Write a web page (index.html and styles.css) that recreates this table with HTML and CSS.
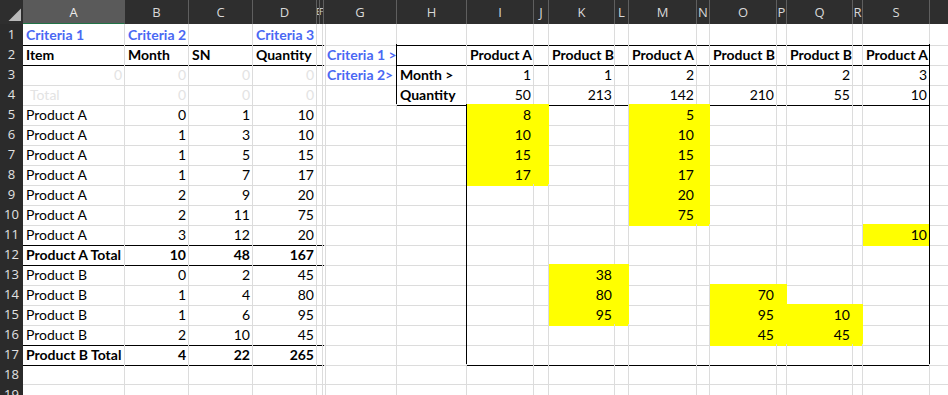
FILE: index.html
```html
<!DOCTYPE html>
<html>
<head>
<meta charset="utf-8">
<link rel="stylesheet" href="styles.css">
</head>
<body>
<div class="sheet">
  <div class="row hdr">
    <div class="h corner"><svg width="23" height="24" viewBox="0 0 23 24"><path d="M8.5 21 L21 8.5 L21 21 Z" fill="#b9b9b9"/></svg></div>
    <div class="h sel">A</div><div class="h">B</div><div class="h">C</div><div class="h">D</div><div class="h tiny">E</div><div class="h tiny">F</div><div class="h">G</div><div class="h">H</div><div class="h">I</div><div class="h">J</div><div class="h">K</div><div class="h">L</div><div class="h">M</div><div class="h">N</div><div class="h">O</div><div class="h">P</div><div class="h">Q</div><div class="h">R</div><div class="h">S</div><div class="h"></div>
  </div>
  <div class="row">
    <div class="rh">1</div>
    <div class="c bl b bb">Criteria 1</div><div class="c bl b bb">Criteria 2</div><div class="c bb"></div><div class="c bl b bb">Criteria 3</div><div class="c bb"></div><div class="c bb"></div>
    <div class="c"></div><div class="c bb"></div><div class="c bb"></div><div class="c bb"></div><div class="c bb"></div><div class="c bb"></div><div class="c bb"></div><div class="c bb"></div><div class="c bb"></div><div class="c bb"></div><div class="c bb"></div><div class="c bb"></div><div class="c bb"></div><div class="c"></div>
  </div>
  <div class="row">
    <div class="rh">2</div>
    <div class="c b bb">Item</div><div class="c b bb">Month</div><div class="c b bb">SN</div><div class="c b bb">Quantity</div><div class="c bb"></div><div class="c bb"></div>
    <div class="c bl b br">Criteria 1 &gt;</div><div class="c bb"></div><div class="c b bb">Product A</div><div class="c bb"></div><div class="c b bb">Product B</div><div class="c bb"></div><div class="c b bb">Product A</div><div class="c bb"></div><div class="c b bb">Product B</div><div class="c bb"></div><div class="c b bb">Product B</div><div class="c bb"></div><div class="c b bb br">Product A</div><div class="c"></div>
  </div>
  <div class="row">
    <div class="rh">3</div>
    <div class="c r gz">0</div><div class="c r gz">0</div><div class="c r gz">0</div><div class="c r gz">0</div><div class="c"></div><div class="c"></div>
    <div class="c bl b br">Criteria 2&gt;</div><div class="c b">Month &gt;</div><div class="c r">1</div><div class="c"></div><div class="c r">1</div><div class="c"></div><div class="c r">2</div><div class="c"></div><div class="c"></div><div class="c"></div><div class="c r">2</div><div class="c"></div><div class="c r br">3</div><div class="c"></div>
  </div>
  <div class="row">
    <div class="rh">4</div>
    <div class="c gz ind">Total</div><div class="c r gz">0</div><div class="c r gz">0</div><div class="c r gz">0</div><div class="c"></div><div class="c"></div>
    <div class="c br"></div><div class="c b bb">Quantity</div><div class="c r bb">50</div><div class="c bb"></div><div class="c r bb">213</div><div class="c bb"></div><div class="c r bb">142</div><div class="c bb"></div><div class="c r bb">210</div><div class="c bb"></div><div class="c r bb">55</div><div class="c bb"></div><div class="c r bb br">10</div><div class="c"></div>
  </div>
  <div class="row">
    <div class="rh">5</div>
    <div class="c">Product A</div><div class="c r">0</div><div class="c r">1</div><div class="c r">10</div><div class="c"></div><div class="c"></div>
    <div class="c"></div><div class="c br"></div><div class="c r y">8</div><div class="c y"></div><div class="c"></div><div class="c"></div><div class="c r y">5</div><div class="c y"></div><div class="c"></div><div class="c"></div><div class="c"></div><div class="c"></div><div class="c br"></div><div class="c"></div>
  </div>
  <div class="row">
    <div class="rh">6</div>
    <div class="c">Product A</div><div class="c r">1</div><div class="c r">3</div><div class="c r">10</div><div class="c"></div><div class="c"></div>
    <div class="c"></div><div class="c br"></div><div class="c r y">10</div><div class="c y"></div><div class="c"></div><div class="c"></div><div class="c r y">10</div><div class="c y"></div><div class="c"></div><div class="c"></div><div class="c"></div><div class="c"></div><div class="c br"></div><div class="c"></div>
  </div>
  <div class="row">
    <div class="rh">7</div>
    <div class="c">Product A</div><div class="c r">1</div><div class="c r">5</div><div class="c r">15</div><div class="c"></div><div class="c"></div>
    <div class="c"></div><div class="c br"></div><div class="c r y">15</div><div class="c y"></div><div class="c"></div><div class="c"></div><div class="c r y">15</div><div class="c y"></div><div class="c"></div><div class="c"></div><div class="c"></div><div class="c"></div><div class="c br"></div><div class="c"></div>
  </div>
  <div class="row">
    <div class="rh">8</div>
    <div class="c">Product A</div><div class="c r">1</div><div class="c r">7</div><div class="c r">17</div><div class="c"></div><div class="c"></div>
    <div class="c"></div><div class="c br"></div><div class="c r y">17</div><div class="c y"></div><div class="c"></div><div class="c"></div><div class="c r y">17</div><div class="c y"></div><div class="c"></div><div class="c"></div><div class="c"></div><div class="c"></div><div class="c br"></div><div class="c"></div>
  </div>
  <div class="row">
    <div class="rh">9</div>
    <div class="c">Product A</div><div class="c r">2</div><div class="c r">9</div><div class="c r">20</div><div class="c"></div><div class="c"></div>
    <div class="c"></div><div class="c br"></div><div class="c"></div><div class="c"></div><div class="c"></div><div class="c"></div><div class="c r y">20</div><div class="c y"></div><div class="c"></div><div class="c"></div><div class="c"></div><div class="c"></div><div class="c br"></div><div class="c"></div>
  </div>
  <div class="row">
    <div class="rh">10</div>
    <div class="c">Product A</div><div class="c r">2</div><div class="c r">11</div><div class="c r">75</div><div class="c"></div><div class="c"></div>
    <div class="c"></div><div class="c br"></div><div class="c"></div><div class="c"></div><div class="c"></div><div class="c"></div><div class="c r y">75</div><div class="c y"></div><div class="c"></div><div class="c"></div><div class="c"></div><div class="c"></div><div class="c br"></div><div class="c"></div>
  </div>
  <div class="row">
    <div class="rh">11</div>
    <div class="c bb">Product A</div><div class="c r bb">3</div><div class="c r bb">12</div><div class="c r bb">20</div><div class="c bb"></div><div class="c bb"></div>
    <div class="c"></div><div class="c br"></div><div class="c"></div><div class="c"></div><div class="c"></div><div class="c"></div><div class="c"></div><div class="c"></div><div class="c"></div><div class="c"></div><div class="c"></div><div class="c"></div><div class="c r y br">10</div><div class="c"></div>
  </div>
  <div class="row">
    <div class="rh">12</div>
    <div class="c b bb">Product A Total</div><div class="c r b bb">10</div><div class="c r b bb">48</div><div class="c r b bb">167</div><div class="c bb"></div><div class="c bb"></div>
    <div class="c"></div><div class="c br"></div><div class="c"></div><div class="c"></div><div class="c"></div><div class="c"></div><div class="c"></div><div class="c"></div><div class="c"></div><div class="c"></div><div class="c"></div><div class="c"></div><div class="c br"></div><div class="c"></div>
  </div>
  <div class="row">
    <div class="rh">13</div>
    <div class="c">Product B</div><div class="c r">0</div><div class="c r">2</div><div class="c r">45</div><div class="c"></div><div class="c"></div>
    <div class="c"></div><div class="c br"></div><div class="c"></div><div class="c"></div><div class="c r y">38</div><div class="c y"></div><div class="c"></div><div class="c"></div><div class="c"></div><div class="c"></div><div class="c"></div><div class="c"></div><div class="c br"></div><div class="c"></div>
  </div>
  <div class="row">
    <div class="rh">14</div>
    <div class="c">Product B</div><div class="c r">1</div><div class="c r">4</div><div class="c r">80</div><div class="c"></div><div class="c"></div>
    <div class="c"></div><div class="c br"></div><div class="c"></div><div class="c"></div><div class="c r y">80</div><div class="c y"></div><div class="c"></div><div class="c"></div><div class="c r y">70</div><div class="c y"></div><div class="c"></div><div class="c"></div><div class="c br"></div><div class="c"></div>
  </div>
  <div class="row">
    <div class="rh">15</div>
    <div class="c">Product B</div><div class="c r">1</div><div class="c r">6</div><div class="c r">95</div><div class="c"></div><div class="c"></div>
    <div class="c"></div><div class="c br"></div><div class="c"></div><div class="c"></div><div class="c r y">95</div><div class="c y"></div><div class="c"></div><div class="c"></div><div class="c r y">95</div><div class="c y"></div><div class="c r y">10</div><div class="c y"></div><div class="c br"></div><div class="c"></div>
  </div>
  <div class="row">
    <div class="rh">16</div>
    <div class="c bb">Product B</div><div class="c r bb">2</div><div class="c r bb">10</div><div class="c r bb">45</div><div class="c bb"></div><div class="c bb"></div>
    <div class="c"></div><div class="c br"></div><div class="c"></div><div class="c"></div><div class="c"></div><div class="c"></div><div class="c"></div><div class="c"></div><div class="c r y">45</div><div class="c y"></div><div class="c r y">45</div><div class="c y"></div><div class="c br"></div><div class="c"></div>
  </div>
  <div class="row">
    <div class="rh">17</div>
    <div class="c b bb">Product B Total</div><div class="c r b bb">4</div><div class="c r b bb">22</div><div class="c r b bb">265</div><div class="c bb"></div><div class="c bb"></div>
    <div class="c"></div><div class="c br"></div><div class="c bb"></div><div class="c bb"></div><div class="c bb"></div><div class="c bb"></div><div class="c bb"></div><div class="c bb"></div><div class="c bb"></div><div class="c bb"></div><div class="c bb"></div><div class="c bb"></div><div class="c bb br"></div><div class="c"></div>
  </div>
  <div class="row">
    <div class="rh">18</div>
    <div class="c"></div><div class="c"></div><div class="c"></div><div class="c"></div><div class="c"></div><div class="c"></div>
    <div class="c"></div><div class="c"></div><div class="c"></div><div class="c"></div><div class="c"></div><div class="c"></div><div class="c"></div><div class="c"></div><div class="c"></div><div class="c"></div><div class="c"></div><div class="c"></div><div class="c"></div><div class="c"></div>
  </div>
  <div class="row">
    <div class="rh">19</div>
    <div class="c"></div><div class="c"></div><div class="c"></div><div class="c"></div><div class="c"></div><div class="c"></div>
    <div class="c"></div><div class="c"></div><div class="c"></div><div class="c"></div><div class="c"></div><div class="c"></div><div class="c"></div><div class="c"></div><div class="c"></div><div class="c"></div><div class="c"></div><div class="c"></div><div class="c"></div><div class="c"></div>
  </div>
</div>
</body>
</html>
```
FILE: styles.css
```css
html, body {
  margin: 0;
  padding: 0;
  background: #ffffff;
  overflow: hidden;
}

.sheet {
  width: 948px;
  height: 395px;
  overflow: hidden;
}

.row {
  display: grid;
  grid-template-columns: 23px 102px 64px 64px 64px 3px 4px 73px 70px 67px 15px 66px 14px 68px 13px 67px 10px 66px 10px 67px 80px;
  height: 20px;
}

.row.hdr {
  height: 24px;
}

.h {
  box-sizing: border-box;
  min-width: 0;
  overflow: hidden;
  background: #2e2e2e;
  color: #d8d8d8;
  border-right: 1px solid #5f5f5f;
  font: 13px "Open Sans", "Noto Sans", sans-serif;
  line-height: 24px;
  text-align: center;
}

.h.tiny {
  font-size: 9px;
  text-align: left;
  text-indent: -1px;
}

.h.corner {
  border-right: none;
}

.h.corner svg {
  display: block;
}

.h.sel {
  background: #5a5a5a;
  color: #ececec;
  border-bottom: 1px solid #217346;
  border-right-color: #5a5a5a;
}

.rh {
  box-sizing: border-box;
  background: #2b2b2b;
  color: #e2e2e2;
  border-bottom: 1px solid #424242;
  font: 13px "Open Sans", "Noto Sans", sans-serif;
  line-height: 20px;
  text-align: center;
}

.c {
  box-sizing: border-box;
  min-width: 0;
  border-right: 1px solid #dcdcdc;
  border-bottom: 1px solid #dcdcdc;
  padding: 1px 2px 0 3px;
  font: 14px Lato, "Liberation Sans", sans-serif;
  line-height: 20px;
  color: #000000;
  white-space: nowrap;
}

.r {
  text-align: right;
}

.b {
  font-weight: 700;
}

.bl {
  color: #4a68f3;
}

.gz {
  color: #e3e3e3;
}

.ind {
  padding-left: 7px;
}

.y {
  background: #ffff00;
  border-right-color: #ffff00;
  border-bottom-color: #ffff00;
}

.bb {
  border-bottom-color: #000000;
}

.br {
  border-right-color: #000000;
}
```
